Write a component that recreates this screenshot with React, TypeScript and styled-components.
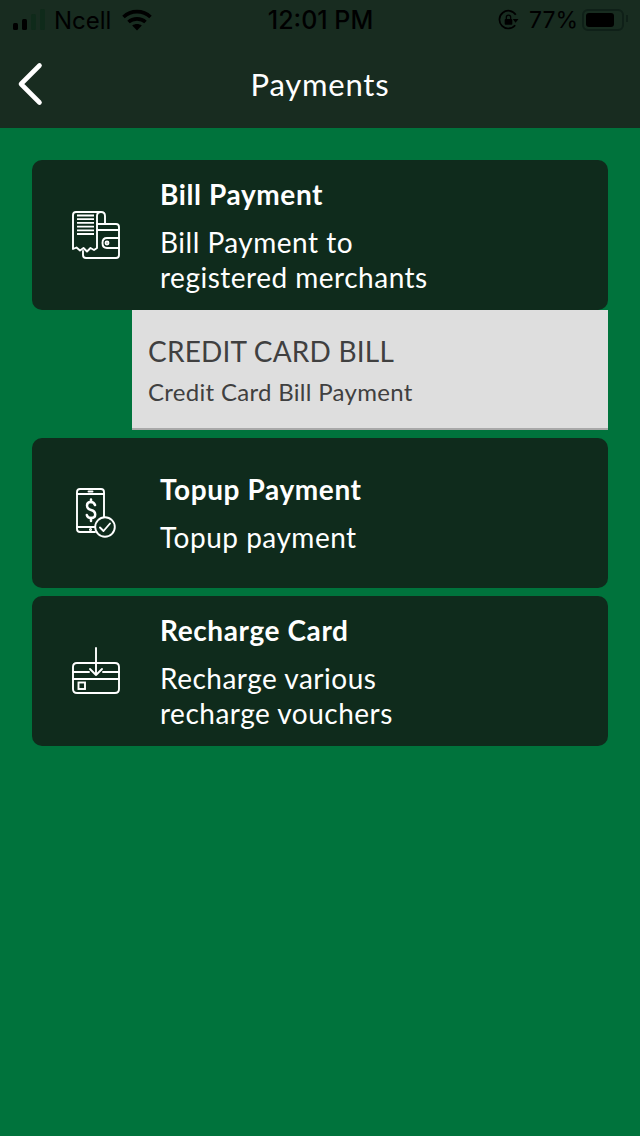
import React from 'react';
import styled, { createGlobalStyle } from 'styled-components';

const GlobalStyle = createGlobalStyle`
    html, body {
        margin: 0;
        padding: 0;
        background: #00733c;
    }
    body {
        font-family: 'Lato', 'Open Sans', sans-serif;
    }
`;

const BackIcon = () => (
    <svg width="28" height="44" viewBox="0 0 28 44" fill="none">
        <path d="M23.5 3.5 L5 22 L23.5 40.5" stroke="#fff" strokeWidth="4.6" strokeLinecap="round" strokeLinejoin="round" />
    </svg>
);

const SignalIcon = () => (
    <svg width="34" height="22" viewBox="0 0 34 22">
        <rect x="0" y="14" width="5" height="7" rx="1.5" fill="#000" />
        <rect x="9" y="10" width="5" height="11" rx="1.5" fill="#000" />
        <rect x="18" y="5" width="5" height="16" rx="1.5" fill="#0f2a1a" />
        <rect x="27" y="0" width="5" height="21" rx="1.5" fill="#0f2a1a" />
    </svg>
);

const WifiIcon = () => (
    <svg width="30" height="22" viewBox="0 0 30 22" fill="none" stroke="#000">
        <path d="M1.5 8 C9 0.8 21 0.8 28.5 8" strokeWidth="3.6" />
        <path d="M6.5 13 C11 8.8 19 8.8 23.5 13" strokeWidth="3.6" />
        <path d="M15 21.5 L10.2 16.6 C13 14.6 17 14.6 19.8 16.6 Z" fill="#000" stroke="none" />
    </svg>
);

const RotationLockIcon = () => (
    <svg width="21" height="22" viewBox="0 0 22 22" fill="none">
        <path d="M18 16.5 A9.3 9.3 0 1 1 18.6 5.5" stroke="#000" strokeWidth="1.8" />
        <path d="M21.5 10 L15.5 10 L18.4 14 Z" fill="#000" />
        <rect x="7" y="10" width="8" height="6" rx="1" fill="#000" />
        <path d="M8.7 10 V8.2 A2.3 2.3 0 0 1 13.3 8.2 V10" stroke="#000" strokeWidth="1.3" />
    </svg>
);

const BillIcon = () => (
    <svg width="50" height="50" viewBox="0 0 50 50" fill="none" stroke="#fff" strokeWidth="1.9" strokeLinejoin="round" strokeLinecap="round">
        <path d="M30 2 H5 Q2 2 2 5 V39 L5.500 37.500 L9 40.500 L12.500 38 L16 41.500 L19.500 38 L23 40 L26 38 V6 Q26 2 30 2 Q34 2 34 6 V14" />
        <path d="M6 5.500 H23 M6 9.200 H23 M6 12.900 H23 M6 16.600 H23 M6 20.300 H23 M6 24 H23" strokeWidth="1.800" strokeLinecap="butt" />
        <path d="M26 14 H45 Q48 14 48 17 V45 Q48 48 45 48 H15 Q12 48 12 45 V41" />
        <path d="M26 20 H48" />
        <path d="M48 28 H36 Q31.500 28 31.500 33 Q31.500 38 36 38 H48" />
        <circle cx="36" cy="33" r="1.500" />
    </svg>
);

const TopupIcon = () => (
    <svg width="40" height="50" viewBox="0 0 40 50" fill="none" stroke="#fff" strokeWidth="1.9" strokeLinecap="round" strokeLinejoin="round">
        <path d="M19 44 H4 Q1 44 1 41 V4 Q1 1 4 1 H25 Q28 1 28 4 V29" />
        <path d="M1 6 H28 M1 39 H19" />
        <path d="M12.500 3.500 H16.500" />
        <circle cx="14.500" cy="41.500" r="0.600" />
        <path d="M19 17 Q18 14 14.800 14 Q11 14 11 17.500 Q11 21 15 22 Q19.200 23 19.200 26.500 Q19.200 30 15 30 Q11.500 30 10.800 27" strokeWidth="2.500" />
        <path d="M15 11.500 V14 M15 30 V33" strokeWidth="2.500" />
        <circle cx="29" cy="39" r="9.800" fill="#0f2b1c" />
        <path d="M24 39.500 L27.500 43 L34 35.500" />
    </svg>
);

const RechargeIcon = () => (
    <svg width="50" height="50" viewBox="0 0 50 50" fill="none" stroke="#fff" strokeWidth="1.9" strokeLinecap="round" strokeLinejoin="round">
        <path d="M6 17 H44 Q48 17 48 21 V43 Q48 47 44 47 H6 Q2 47 2 43 V21 Q2 17 6 17 Z" />
        <path d="M2 26 H18 M32 26 H48 M2 33 H48" />
        <path d="M25 2 V29 M19 23 L25 29 L31 23" />
        <rect x="7.500" y="36.500" width="6.500" height="6.500" strokeLinecap="butt" strokeLinejoin="miter" />
    </svg>
);

interface Payment {
    title: string;
    description: string[];
    icon: React.ReactNode;
    sub?: { title: string; description: string };
}

const payments: Payment[] = [
    {
        title: 'Bill Payment',
        description: ['Bill Payment to', 'registered merchants'],
        icon: <BillIcon />,
        sub: { title: 'CREDIT CARD BILL', description: 'Credit Card Bill Payment' },
    },
    {
        title: 'Topup Payment',
        description: ['Topup payment'],
        icon: <TopupIcon />,
    },
    {
        title: 'Recharge Card',
        description: ['Recharge various', 'recharge vouchers'],
        icon: <RechargeIcon />,
    },
];

const App = () => {
    return (
        <Page>
            <GlobalStyle />
            <Header>
                <StatusBar>
                    <StatusSide>
                        <SignalIcon />
                        <Carrier>Ncell</Carrier>
                        <WifiIcon />
                    </StatusSide>
                    <StatusTime>12:01 PM</StatusTime>
                    <StatusSide $end>
                        <RotationLockIcon />
                        <StatusText>77%</StatusText>
                        <Battery>
                            <BatteryFill />
                        </Battery>
                    </StatusSide>
                </StatusBar>
                <NavBar>
                    <BackButton>
                        <BackIcon />
                    </BackButton>
                    <NavTitle>Payments</NavTitle>
                </NavBar>
            </Header>
            <List>
                {payments.map((item) => (
                    <Group key={item.title}>
                        <Card>
                            <IconSlot>{item.icon}</IconSlot>
                            <CardText>
                                <CardTitle>{item.title}</CardTitle>
                                <CardDescription>
                                    {item.description.map((line) => (
                                        <div key={line}>{line}</div>
                                    ))}
                                </CardDescription>
                            </CardText>
                        </Card>
                        {item.sub && (
                            <SubItem>
                                <SubTitle>{item.sub.title}</SubTitle>
                                <SubDescription>{item.sub.description}</SubDescription>
                            </SubItem>
                        )}
                    </Group>
                ))}
            </List>
        </Page>
    );
};

export default App;

const Page = styled.div`
    width: 640px;
    height: 1136px;
    overflow: hidden;
    background: #00733c;
`;

const Header = styled.header`
    height: 128px;
    background: #182c20;
    display: flex;
    flex-direction: column;
`;

const StatusBar = styled.div`
    height: 40px;
    padding: 0 12px 0 13px;
    display: grid;
    grid-template-columns: 1fr auto 1fr;
    align-items: center;
    color: #000;
`;

const StatusSide = styled.div<{ $end?: boolean }>`
    display: flex;
    align-items: center;
    gap: ${(p) => (p.$end ? '10px' : '7px')};
    justify-content: ${(p) => (p.$end ? 'flex-end' : 'flex-start')};
`;

const StatusText = styled.span`
    font-family: 'Inter', sans-serif;
    font-size: 23px;
`;

const Carrier = styled(StatusText)`
    font-size: 24px;
    margin-right: 4px;
`;

const StatusTime = styled(StatusText)`
    font-size: 25px;
    font-weight: 500;
`;

const Battery = styled.div`
    position: relative;
    width: 34px;
    height: 14px;
    padding: 2px;
    border: 2px solid #0f2018;
    border-radius: 6px;
    margin: 0 4px 0 -6px;
    &::after {
        content: '';
        position: absolute;
        right: -6px;
        top: 4px;
        width: 2px;
        height: 7px;
        background: #0f2018;
    }
`;

const BatteryFill = styled.div`
    width: 28px;
    height: 100%;
    border-radius: 3px;
    background: #000;
`;

const NavBar = styled.div`
    position: relative;
    flex: 1;
    display: flex;
    align-items: center;
    justify-content: center;
`;

const BackButton = styled.div`
    position: absolute;
    left: 16px;
    top: 22px;
    display: flex;
`;

const NavTitle = styled.h1`
    margin: 0;
    font-size: 31px;
    font-weight: 400;
    color: #fff;
    letter-spacing: 0.8px;
`;

const List = styled.main`
    padding: 32px 32px 0;
    display: flex;
    flex-direction: column;
    gap: 8px;
`;

const Group = styled.section`
    display: flex;
    flex-direction: column;
`;

const Card = styled.div`
    height: 150px;
    display: flex;
    align-items: center;
    background: #0f2b1c;
    border-radius: 10px;
`;

const IconSlot = styled.div`
    width: 128px;
    flex: none;
    display: flex;
    align-items: center;
    justify-content: center;
`;

const CardText = styled.div`
    padding-top: 3px;
    color: #fff;
`;

const CardTitle = styled.div`
    font-size: 28px;
    font-weight: 700;
    line-height: 30px;
    letter-spacing: 0.6px;
`;

const CardDescription = styled.div`
    margin-top: 16px;
    font-size: 28px;
    line-height: 35px;
    letter-spacing: 0.5px;
`;

const SubItem = styled.div`
    margin-left: 100px;
    height: 120px;
    box-sizing: border-box;
    padding: 24px 16px 0;
    background: #dedede;
    border-bottom: 2px solid #a8a8a8;
    color: #404040;
`;

const SubTitle = styled.div`
    font-size: 28px;
    line-height: 34px;
    letter-spacing: 0.2px;
`;

const SubDescription = styled.div`
    margin-top: 7px;
    font-size: 24px;
    line-height: 34px;
    letter-spacing: 0.3px;
`;
